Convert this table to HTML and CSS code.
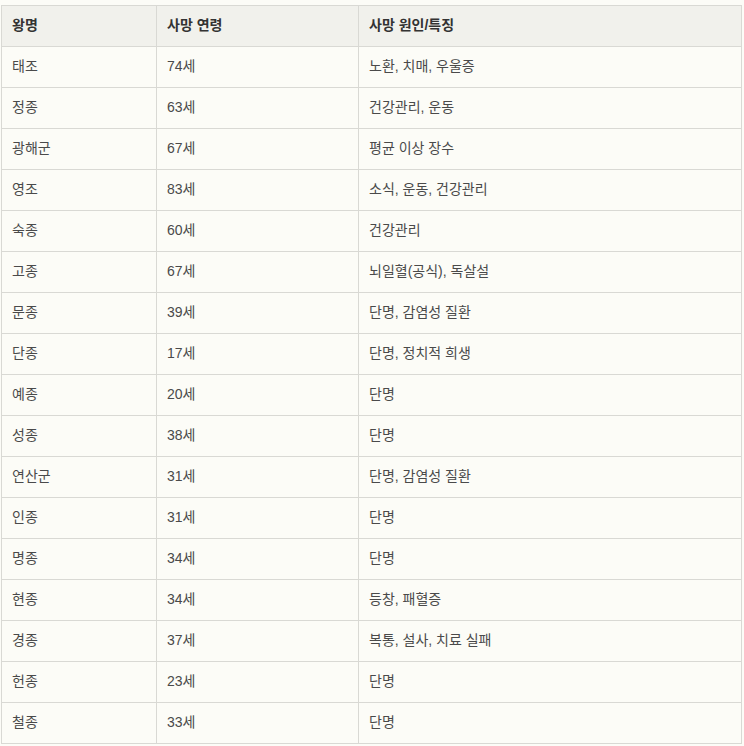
FILE: index.html
```html
<!DOCTYPE html>
<html lang="ko">
<head>
<meta charset="utf-8">
<link rel="stylesheet" href="styles.css">
</head>
<body>
<table class="kings">
  <thead>
    <tr><th class="c1">왕명</th><th class="c2">사망 연령</th><th>사망 원인/특징</th></tr>
  </thead>
  <tbody>
    <tr><td>태조</td><td>74세</td><td>노환, 치매, 우울증</td></tr>
    <tr><td>정종</td><td>63세</td><td>건강관리, 운동</td></tr>
    <tr><td>광해군</td><td>67세</td><td>평균 이상 장수</td></tr>
    <tr><td>영조</td><td>83세</td><td>소식, 운동, 건강관리</td></tr>
    <tr><td>숙종</td><td>60세</td><td>건강관리</td></tr>
    <tr><td>고종</td><td>67세</td><td>뇌일혈(공식), 독살설</td></tr>
    <tr><td>문종</td><td>39세</td><td>단명, 감염성 질환</td></tr>
    <tr><td>단종</td><td>17세</td><td>단명, 정치적 희생</td></tr>
    <tr><td>예종</td><td>20세</td><td>단명</td></tr>
    <tr><td>성종</td><td>38세</td><td>단명</td></tr>
    <tr><td>연산군</td><td>31세</td><td>단명, 감염성 질환</td></tr>
    <tr><td>인종</td><td>31세</td><td>단명</td></tr>
    <tr><td>명종</td><td>34세</td><td>단명</td></tr>
    <tr><td>현종</td><td>34세</td><td>등창, 패혈증</td></tr>
    <tr><td>경종</td><td>37세</td><td>복통, 설사, 치료 실패</td></tr>
    <tr><td>헌종</td><td>23세</td><td>단명</td></tr>
    <tr><td>철종</td><td>33세</td><td>단명</td></tr>
  </tbody>
</table>
</body>
</html>
```

FILE: styles.css
```css
html, body {
  margin: 0;
  padding: 0;
  background: #fcfcf7;
}
body {
  padding: 5px 0 0 1px;
  font-family: "Liberation Sans", "Noto Sans CJK KR", sans-serif;
  font-size: 14px;
}
.kings {
  border-collapse: collapse;
  width: 741px;
  table-layout: fixed;
}
.kings th, .kings td {
  border: 1px solid #d9d9d4;
  padding: 0 10px 2px 10px;
  height: 41px;
  box-sizing: border-box;
  text-align: left;
  vertical-align: middle;
  line-height: 20px;
}
.kings th {
  background: #f1f1ec;
  color: #333333;
  font-weight: 600;
}
.kings td {
  color: #4a4a4a;
  font-weight: 400;
}
.kings .c1 { width: 155px; }
.kings .c2 { width: 202px; }
```
